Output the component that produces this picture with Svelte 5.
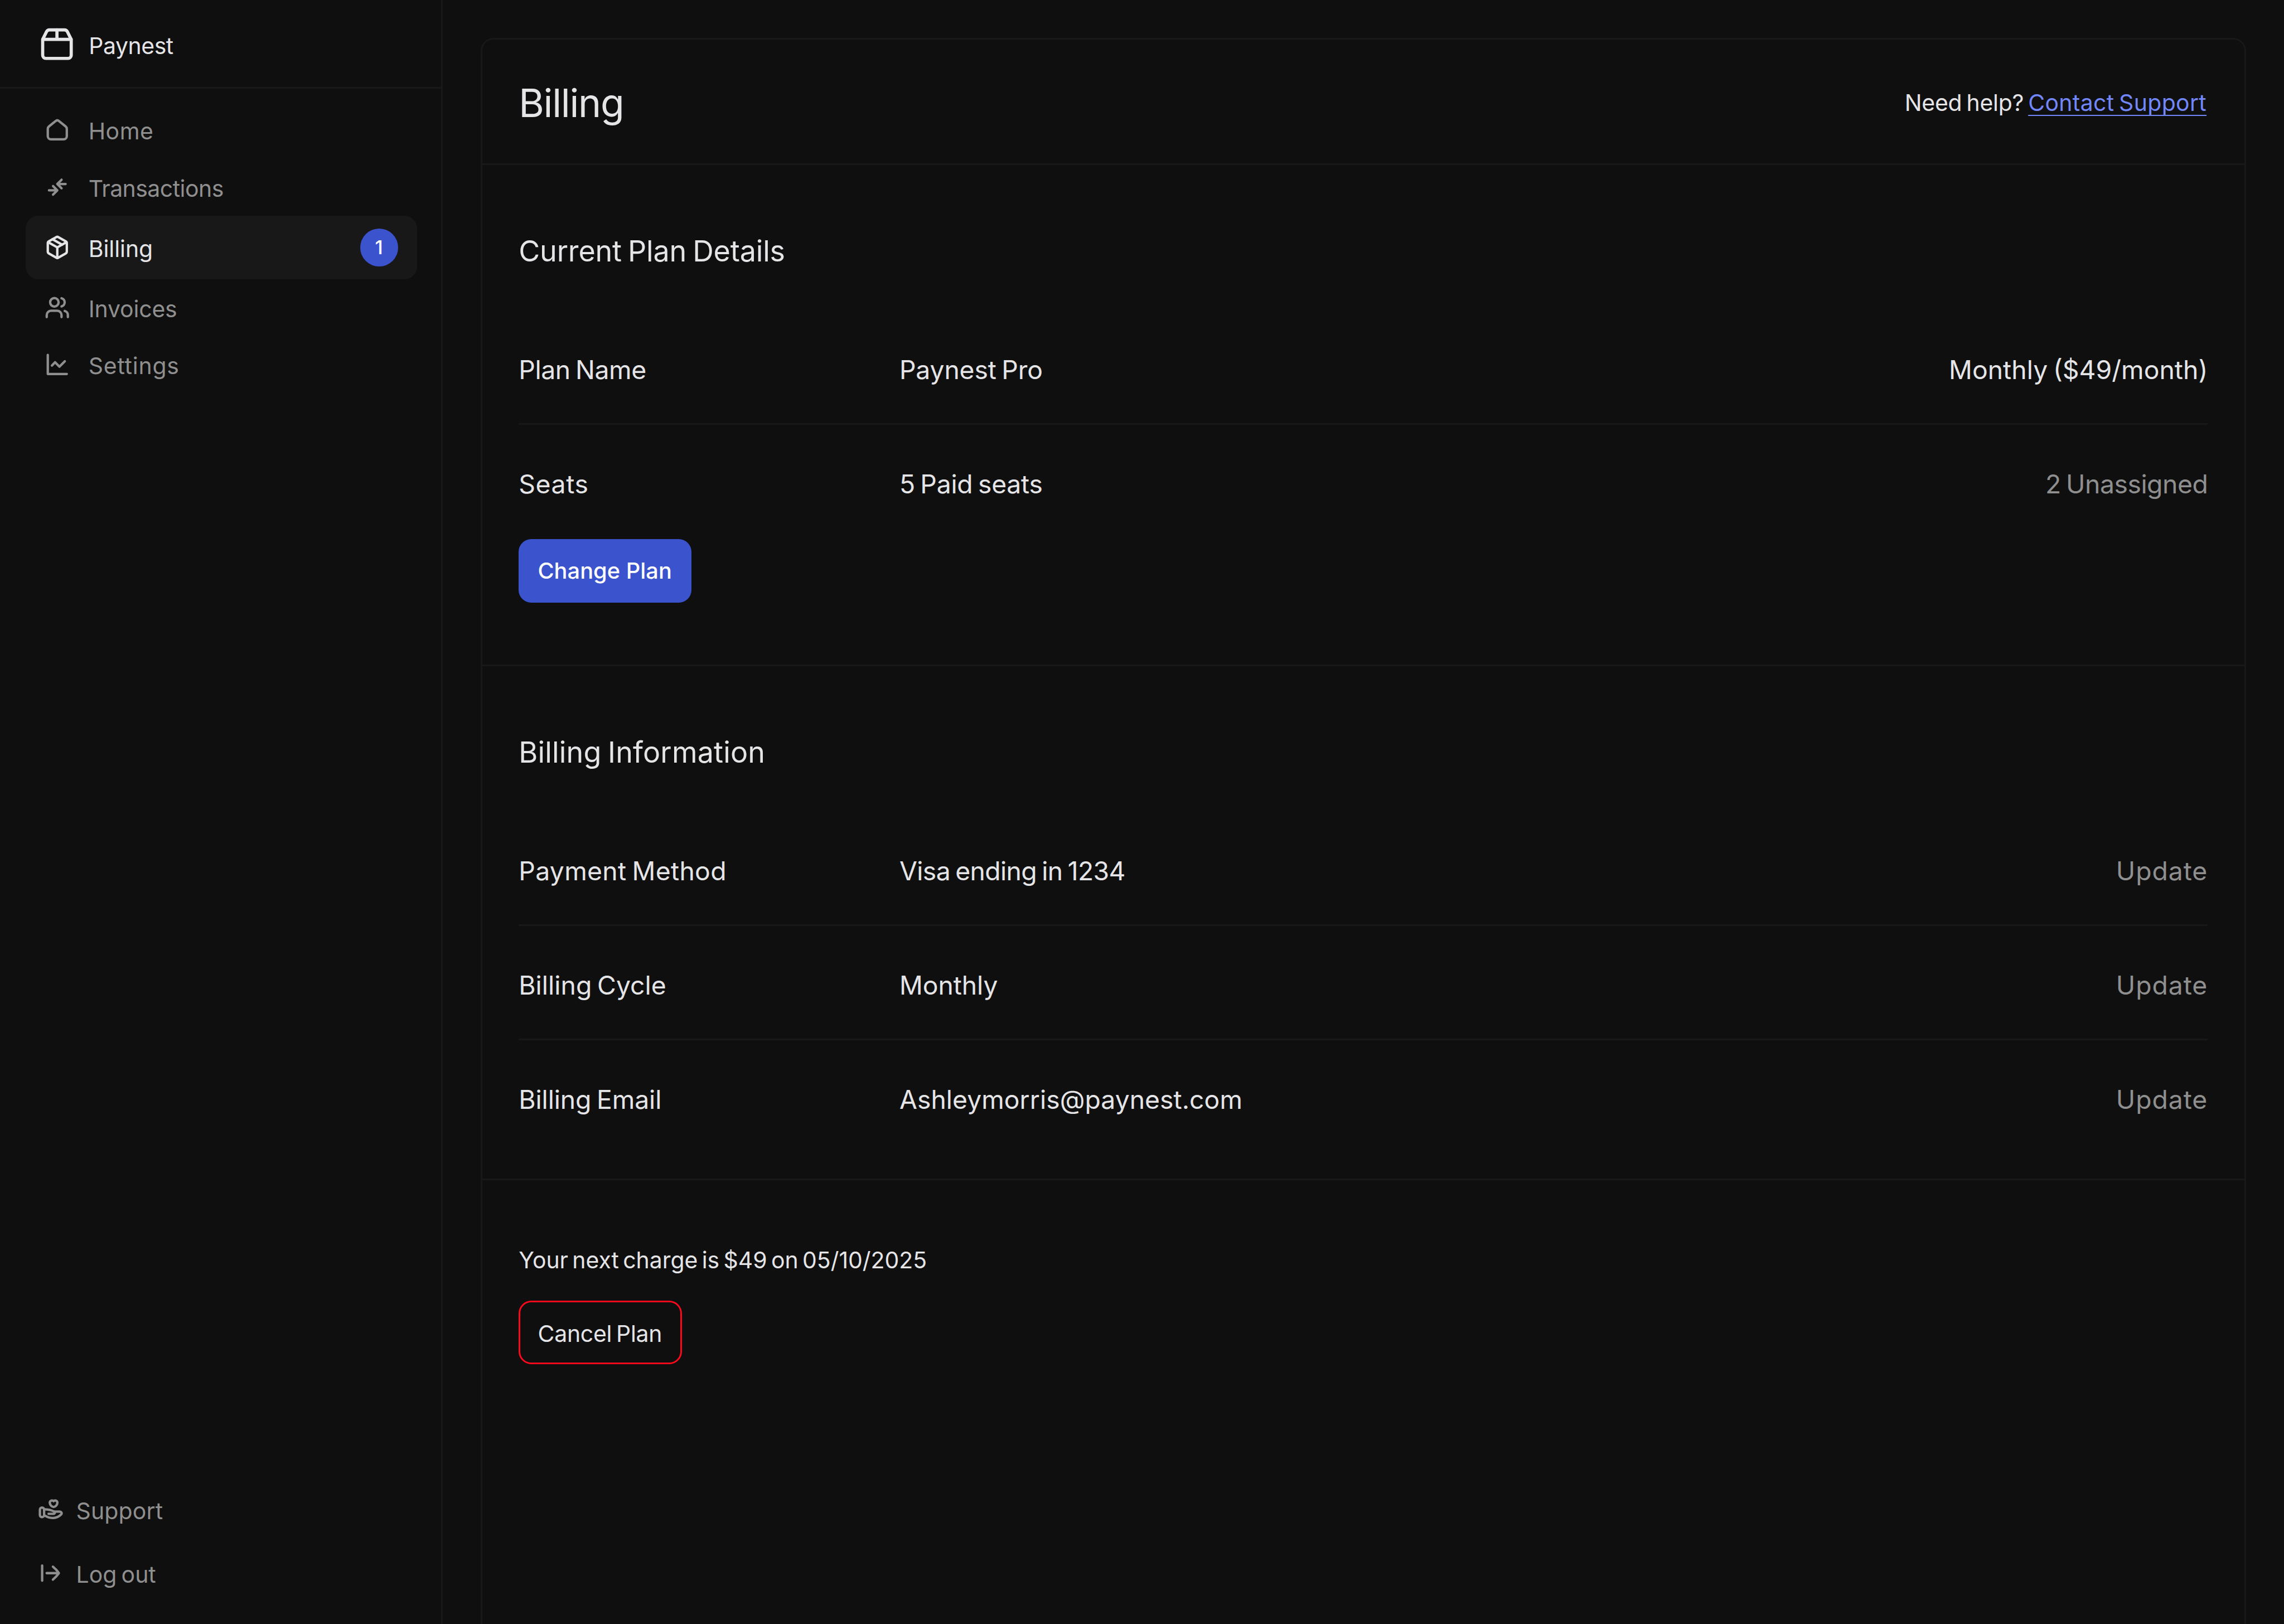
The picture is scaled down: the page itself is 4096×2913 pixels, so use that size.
<script>
    const navItems = [
        { label: "Home", icon: "home", tracking: 0.012 },
        { label: "Transactions", icon: "transactions", tracking: -0.013 },
        { label: "Billing", icon: "billing", tracking: -0.001, active: true, badge: 1 },
        { label: "Invoices", icon: "invoices", tracking: -0.004 },
        { label: "Settings", icon: "settings", tracking: 0.019 },
    ];

    const footerItems = [
        { label: "Support", icon: "support", tracking: 0.004 },
        { label: "Log out", icon: "logout", tracking: 0 },
    ];

    const planRows = [
        {
            label: { text: "Plan Name", tracking: -0.01 },
            value: { text: "Paynest Pro", tracking: -0.004 },
            extra: { text: "Monthly ($49/month)", tracking: 0 },
        },
        {
            label: { text: "Seats", tracking: 0.012 },
            value: { text: "5 Paid seats", tracking: -0.006 },
            extra: { text: "2 Unassigned", tracking: -0.011, muted: true },
        },
    ];

    const update = { text: "Update", tracking: 0.02, muted: true };

    const billingRows = [
        {
            label: { text: "Payment Method", tracking: 0.006 },
            value: { text: "Visa ending in 1234", tracking: -0.014 },
            extra: update,
        },
        {
            label: { text: "Billing Cycle", tracking: 0 },
            value: { text: "Monthly", tracking: -0.002 },
            extra: update,
        },
        {
            label: { text: "Billing Email", tracking: -0.003 },
            value: { text: "Ashleymorris@paynest.com", tracking: 0 },
            extra: update,
        },
    ];

    const icons = {
        home: [
            "M7.05 2.4 2.75 5.9A2 2 0 0 0 2 7.45V12a2 2 0 0 0 2 2h8a2 2 0 0 0 2-2V7.45a2 2 0 0 0-.75-1.55L8.95 2.4a1.5 1.5 0 0 0-1.9 0z",
        ],
        transactions: [
            "M2.75 10H8M5.33 7.3 8 10l-2.67 2.7",
            "M13.25 6H8M10.7 3.3 8 6l2.7 2.7",
        ],
        billing: [
            "M14 5.33a1.33 1.33 0 0 0-.67-1.15L8.67 1.51a1.33 1.33 0 0 0-1.34 0L2.67 4.18A1.33 1.33 0 0 0 2 5.33v5.34a1.33 1.33 0 0 0 .67 1.15l4.66 2.67a1.33 1.33 0 0 0 1.34 0l4.66-2.67a1.33 1.33 0 0 0 .67-1.15z",
            "M2.2 4.67 8 8l5.8-3.33M8 14.67V8",
            "m5 2.85 6 3.43",
        ],
        invoices: [
            "M10.67 14v-1.33A2.67 2.67 0 0 0 8 10H4a2.67 2.67 0 0 0-2.67 2.67V14",
            "M6 7.33A2.67 2.67 0 1 0 6 2a2.67 2.67 0 0 0 0 5.33z",
            "M14.67 14v-1.33a2.67 2.67 0 0 0-2-2.58M10.67 2.09a2.67 2.67 0 0 1 0 5.16",
        ],
        settings: ["M2 2v12h12", "m4.6 8.7 2-2.1 2.75 2.8 3.4-3.45"],
        support: [
            "M9.88 2.75c-.9-.95-2.4-.4-2.4.95 0 1.2 1.2 2.65 2.4 2.65s2.4-1.45 2.4-2.65c0-1.35-1.5-1.9-2.4-.95z",
            "M2.6 6.75c-.8 0-1.35.6-1.35 1.35v3.3c0 .75.55 1.35 1.35 1.35s1.3-.6 1.3-1.35V8.1c0-.75-.5-1.35-1.3-1.35z",
            "M6.7 10.65h3.2c.8 0 1.1-1 .4-1.35C8.6 8.4 6.7 7.9 4.2 7.9",
            "M10.6 9.3h2.9c1.4 0 1.9 1.1 1 1.9-2.9 2.7-6.9 2.7-10.3.5",
        ],
        logout: ["M2.67 3.25v9.5", "M5.5 8H13", "M9.45 3.95Q11.9 6 13.2 8q-1.3 2-3.75 4.05"],
    };
</script>

{#snippet icon(name)}
    <svg class="icon" viewBox="0 0 16 16" aria-hidden="true">
        {#each icons[name] as d}
            <path {d} />
        {/each}
    </svg>
{/snippet}

{#snippet cell(c)}
    <span class:muted={c.muted} style:letter-spacing="{c.tracking}em">{c.text}</span>
{/snippet}

{#snippet details(rows)}
    <div class="rows">
        {#each rows as row}
            <div class="row">
                {@render cell(row.label)}
                {@render cell(row.value)}
                {@render cell(row.extra)}
            </div>
        {/each}
    </div>
{/snippet}

<div class="app">
    <aside class="sidebar">
        <div class="brand">
            <svg class="logo" viewBox="0 0 24 24" aria-hidden="true">
                <path d="M12 3v6M3.05 9h17.9" />
                <path
                    d="M16.76 3a2 2 0 0 1 1.8 1.1l2.23 4.48a2 2 0 0 1 .21.89V19a2 2 0 0 1-2 2H5a2 2 0 0 1-2-2V9.47a2 2 0 0 1 .21-.89L5.45 4.1A2 2 0 0 1 7.24 3z"
                />
            </svg>
            <span class="brand-name">Paynest</span>
        </div>

        <nav class="nav">
            {#each navItems as item}
                <a href="#{item.icon}" class="nav-item" class:active={item.active}>
                    {@render icon(item.icon)}
                    <span class="nav-label" style:letter-spacing="{item.tracking}em">{item.label}</span>
                    {#if item.badge}
                        <span class="badge">{item.badge}</span>
                    {/if}
                </a>
            {/each}
        </nav>

        <div class="sidebar-footer">
            {#each footerItems as item}
                <a href="#{item.icon}" class="footer-item">
                    {@render icon(item.icon)}
                    <span class="nav-label" style:letter-spacing="{item.tracking}em">{item.label}</span>
                </a>
            {/each}
        </div>
    </aside>

    <main class="panel">
        <header class="panel-header">
            <h1>Billing</h1>
            <p class="help">
                <span>Need help?</span>
                <a href="#support">Contact Support</a>
            </p>
        </header>

        <section class="plan">
            <h2 class="plan-title">Current Plan Details</h2>
            {@render details(planRows)}
            <button class="btn primary">Change Plan</button>
        </section>

        <section class="billing">
            <h2>Billing Information</h2>
            {@render details(billingRows)}
        </section>

        <section class="cancel">
            <p class="next-charge">Your next charge is $49 on 05/10/2025</p>
            <button class="btn danger">Cancel Plan</button>
        </section>
    </main>
</div>

<style>
    /* 1rem = 10px on the 1440px wide layout */
    :global(html) {
        font-size: calc(100vw / 144);
    }

    :global(body) {
        margin: 0;
        background: #0f0f0f;
    }

    .app {
        --bg: #0f0f0f;
        --line: #181818;
        --border: 3px solid var(--line);
        --text: #e5e5e8;
        --muted: #8f8f8f;
        --primary: #3b53cd;
        display: flex;
        height: 100vh;
        overflow: hidden;
        background: var(--bg);
        color: var(--text);
        font-family: Inter, "Liberation Sans", sans-serif;
        font-size: 1.44rem;
        line-height: 1;
        word-spacing: -0.08em;
        white-space: nowrap;
    }

    .app * {
        box-sizing: border-box;
    }

    a {
        color: inherit;
        text-decoration: none;
    }

    h1,
    h2,
    p {
        margin: 0;
        font-weight: 400;
    }

    svg {
        flex: none;
        fill: none;
        stroke: currentColor;
        stroke-linecap: round;
        stroke-linejoin: round;
    }

    .sidebar {
        flex: none;
        display: flex;
        flex-direction: column;
        width: 27.9rem;
        border-right: var(--border);
    }

    .brand {
        display: flex;
        align-items: center;
        gap: 0.8rem;
        height: 5.6rem;
        padding: 0.1rem 2.4rem 0;
        border-bottom: var(--border);
    }

    .logo {
        width: 2.4rem;
        height: 2.4rem;
        stroke-width: 2;
    }

    .brand-name {
        padding-top: 0.18rem;
        letter-spacing: -0.011em;
    }

    .nav {
        flex: 1;
        padding: 0.8rem 1.5rem 0 1.6rem;
    }

    .nav-item {
        display: flex;
        align-items: center;
        gap: 1.18rem;
        height: 3.6rem;
        padding: 0 1.2rem;
        border-radius: 0.8rem;
        color: var(--muted);
    }

    .nav-item.active {
        height: 4rem;
        background: #181818;
        color: var(--text);
    }

    .nav-label {
        padding-top: 0.18rem;
    }

    .icon {
        width: 1.6rem;
        height: 1.6rem;
        stroke-width: 1.5;
    }

    .badge {
        display: flex;
        align-items: center;
        justify-content: center;
        width: 2.4rem;
        height: 2.4rem;
        margin-left: auto;
        border-radius: 50%;
        background: var(--primary);
        color: #fff;
        font-size: 1.2rem;
        font-weight: 500;
    }

    .sidebar-footer {
        padding: 0 2.4rem 1.2rem;
    }

    .footer-item {
        display: flex;
        align-items: center;
        gap: 0.8rem;
        height: 4rem;
        color: var(--muted);
    }

    .panel {
        flex: 1;
        margin: 2.4rem 2.4rem 0;
        border: var(--border);
        border-bottom: none;
        border-radius: 0.8rem 0.8rem 0 0;
    }

    .panel-header {
        display: flex;
        align-items: center;
        justify-content: space-between;
        height: 7.9rem;
        padding: 0 2.38rem 0 2.3rem;
        border-bottom: var(--border);
    }

    h1 {
        padding-top: 0.22rem;
        font-size: 2.45rem;
        letter-spacing: -0.018em;
    }

    .help {
        display: flex;
        gap: 0.28rem;
        padding-top: 0.19rem;
        letter-spacing: -0.006em;
    }

    .help a {
        color: #7287fa;
        letter-spacing: 0.008em;
        text-decoration: underline;
        text-decoration-thickness: 0.075rem;
        text-decoration-skip-ink: none;
        text-underline-offset: 0.23rem;
    }

    section {
        padding: 4rem 2.3rem 0;
    }

    .plan {
        padding-bottom: 3.9rem;
        border-bottom: var(--border);
    }

    .billing {
        padding-bottom: 1.5rem;
        border-bottom: var(--border);
    }

    h2 {
        margin-bottom: 2.34rem;
        font-size: 1.83rem;
        line-height: 2.86rem;
        letter-spacing: 0.003em;
    }

    .plan-title {
        letter-spacing: -0.004em;
    }

    .row {
        display: grid;
        grid-template-columns: 24rem 1fr auto;
        align-items: center;
        height: 7.2rem;
        padding-top: 0.33rem;
        border-bottom: var(--border);
        font-size: 1.63rem;
    }

    .row:last-child {
        border-color: transparent;
    }

    .muted {
        color: var(--muted);
    }

    .btn {
        display: flex;
        align-items: center;
        height: 4rem;
        border: none;
        border-radius: 0.8rem;
        font: inherit;
        word-spacing: inherit;
        white-space: nowrap;
    }

    .primary {
        width: 10.9rem;
        padding: 0 1.2rem;
        background: var(--primary);
        color: #fff;
        font-size: 1.4rem;
        font-weight: 500;
        word-spacing: normal;
    }

    .danger {
        width: 10.3rem;
        padding: 0.17rem 1.1rem 0;
        border: 3px solid #f80a1c;
        background: none;
        color: var(--text);
        letter-spacing: -0.007em;
    }

    .next-charge {
        margin-bottom: 1.45rem;
        line-height: 2.17rem;
        letter-spacing: -0.001em;
        word-spacing: -0.1em;
    }
</style>
